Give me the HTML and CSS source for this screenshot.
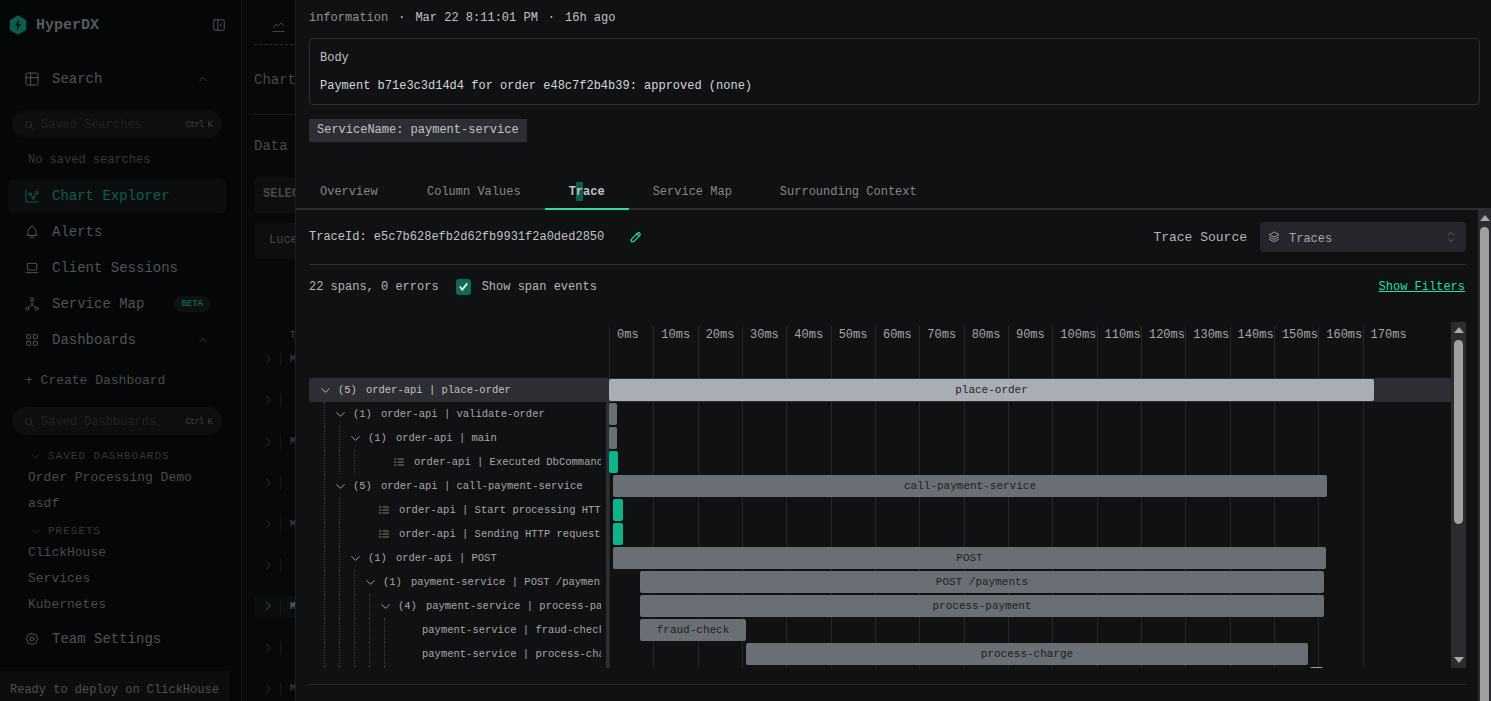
FILE: index.html
```html
<!DOCTYPE html>
<html lang="en">
<head>
    <meta charset="UTF-8">
    <meta name="viewport" content="width=device-width, initial-scale=1.0">
    <title>HyperDX - Chart Explorer</title>
    <link rel="stylesheet" href="styles.css">
</head>
<body>
    <svg class="sprite" aria-hidden="true">
        <symbol id="i-table" viewBox="0 0 24 24"><path d="M3 5a2 2 0 0 1 2-2h14a2 2 0 0 1 2 2v14a2 2 0 0 1-2 2H5a2 2 0 0 1-2-2zM3 10h18M10 3v18"/></symbol>
        <symbol id="i-chart" viewBox="0 0 24 24"><path d="M3 3v18h18"/><circle cx="9" cy="9" r="2"/><circle cx="19" cy="7" r="2"/><circle cx="14" cy="15" r="2"/><path d="M10.16 10.62l2.34 2.88M15.09 13.33l2.84-4.59"/></symbol>
        <symbol id="i-bell" viewBox="0 0 24 24"><path d="M10 5a2 2 0 1 1 4 0a7 7 0 0 1 4 6v3a4 4 0 0 0 2 3H4a4 4 0 0 0 2-3v-3a7 7 0 0 1 4-6M9 17v1a3 3 0 0 0 6 0v-1"/></symbol>
        <symbol id="i-laptop" viewBox="0 0 24 24"><path d="M3 19h18M5 6a1 1 0 0 1 1-1h12a1 1 0 0 1 1 1v8a1 1 0 0 1-1 1H6a1 1 0 0 1-1-1z"/></symbol>
        <symbol id="i-map" viewBox="0 0 24 24"><circle cx="12" cy="5" r="2.4"/><circle cx="5" cy="19" r="2.4"/><circle cx="19" cy="19" r="2.4"/><path d="M6.5 17.5l5.5-4.5l5.5 4.5M12 7.5V13"/></symbol>
        <symbol id="i-grid" viewBox="0 0 24 24"><rect x="4" y="4" width="6" height="6" rx="1"/><rect x="14" y="4" width="6" height="6" rx="1"/><rect x="4" y="14" width="6" height="6" rx="1"/><rect x="14" y="14" width="6" height="6" rx="1"/></symbol>
        <symbol id="i-gear" viewBox="0 0 24 24"><path d="M10.325 4.317c.426-1.756 2.924-1.756 3.35 0a1.724 1.724 0 0 0 2.573 1.066c1.543-.94 3.31.826 2.37 2.37a1.724 1.724 0 0 0 1.065 2.572c1.756.426 1.756 2.924 0 3.35a1.724 1.724 0 0 0-1.066 2.573c.94 1.543-.826 3.31-2.37 2.37a1.724 1.724 0 0 0-2.572 1.065c-.426 1.756-2.924 1.756-3.35 0a1.724 1.724 0 0 0-2.573-1.066c-1.543.94-3.31-.826-2.37-2.37a1.724 1.724 0 0 0-1.065-2.572c-1.756-.426-1.756-2.924 0-3.35a1.724 1.724 0 0 0 1.066-2.573c-.94-1.543.826-3.31 2.37-2.37c1 .608 2.296.07 2.572-1.065z"/><circle cx="12" cy="12" r="3"/></symbol>
        <symbol id="i-search" viewBox="0 0 24 24"><circle cx="10" cy="10" r="7"/><path d="M21 21l-6-6"/></symbol>
        <symbol id="i-up" viewBox="0 0 24 24"><path d="M6 15l6-6l6 6"/></symbol>
        <symbol id="i-down" viewBox="0 0 24 24"><path d="M6 9l6 6l6-6"/></symbol>
        <symbol id="i-right" viewBox="0 0 24 24"><path d="M9 5l7 7l-7 7"/></symbol>
        <symbol id="i-panel" viewBox="0 0 24 24"><rect x="3" y="3" width="18" height="18" rx="2"/><path d="M10 3v18M16.5 9.5L14 12l2.5 2.5"/></symbol>
        <symbol id="i-line" viewBox="0 0 24 24"><path d="M3 20h18M4 14l4-6l4 3l4-5l4 5"/></symbol>
        <symbol id="i-stack" viewBox="0 0 24 24"><path d="M12 4L4 8l8 4l8-4zM4 12l8 4l8-4M4 16l8 4l8-4"/></symbol>
        <symbol id="i-select" viewBox="0 0 24 24"><path d="M8 9l4-4l4 4M16 15l-4 4l-4-4"/></symbol>
        <symbol id="i-pencil" viewBox="0 0 24 24"><path d="M4 20h4L18.5 9.5a2.83 2.83 0 0 0-4-4L4 16zM13.5 6.5l4 4"/></symbol>
        <symbol id="i-list" viewBox="0 0 24 24"><path d="M10 6h11M10 12h11M10 18h11M3 6h3M3 12h3M3 18h3"/></symbol>
    </svg>

    <aside class="sidebar">
        <div class="brand">
            <svg class="logo" viewBox="0 0 24 26"><path class="logo-hex" d="M12 0l11 6.5v13L12 26L1 19.5v-13z"/><path class="logo-bolt" d="M14 5l-6 9h3.5L10 21l6-9.5h-3.5z"/></svg>
            <span class="brand-name">HyperDX</span>
            <svg class="icon brand-toggle"><use href="#i-panel"/></svg>
        </div>

        <div class="nav-item nav-first">
            <svg class="icon"><use href="#i-table"/></svg><span>Search</span>
            <svg class="icon chevron"><use href="#i-up"/></svg>
        </div>
        <div class="pill pill-searches">
            <svg class="icon"><use href="#i-search"/></svg><span>Saved Searches</span><kbd>Ctrl K</kbd>
        </div>
        <div class="empty-note">No saved searches</div>

        <div class="nav-item active">
            <svg class="icon"><use href="#i-chart"/></svg><span>Chart Explorer</span>
        </div>
        <div class="nav-item">
            <svg class="icon"><use href="#i-bell"/></svg><span>Alerts</span>
        </div>
        <div class="nav-item">
            <svg class="icon"><use href="#i-laptop"/></svg><span>Client Sessions</span>
        </div>
        <div class="nav-item">
            <svg class="icon"><use href="#i-map"/></svg><span>Service Map</span><b class="beta">BETA</b>
        </div>
        <div class="nav-item">
            <svg class="icon"><use href="#i-grid"/></svg><span>Dashboards</span>
            <svg class="icon chevron"><use href="#i-up"/></svg>
        </div>

        <div class="create-link">+ Create Dashboard</div>
        <div class="pill pill-dashboards">
            <svg class="icon"><use href="#i-search"/></svg><span>Saved Dashboards</span><kbd>Ctrl K</kbd>
        </div>

        <div class="group-title group-saved"><svg class="icon"><use href="#i-down"/></svg>SAVED DASHBOARDS</div>
        <div class="sub-link">Order Processing Demo</div>
        <div class="sub-link">asdf</div>
        <div class="group-title group-presets"><svg class="icon"><use href="#i-down"/></svg>PRESETS</div>
        <div class="sub-link">ClickHouse</div>
        <div class="sub-link">Services</div>
        <div class="sub-link">Kubernetes</div>

        <div class="nav-item nav-team">
            <svg class="icon"><use href="#i-gear"/></svg><span>Team Settings</span>
        </div>
        <div class="deploy-note">Ready to deploy on ClickHouse</div>
    </aside>

    <main class="page">
        <div class="page-tabs"><svg class="icon"><use href="#i-line"/></svg></div>
        <div class="page-title">Chart Explorer</div>
        <div class="page-label">Data Source</div>
        <div class="page-box page-select">SELECT</div>
        <div class="page-box page-lucene">Lucene</div>
        <div class="page-th">Timestamp</div>
        <div class="log-list">
            <div class="log-line"><svg class="icon"><use href="#i-right"/></svg><i></i><span>M</span></div>
            <div class="log-line"><span>M</span></div>
            <div class="log-line"><svg class="icon"><use href="#i-right"/></svg><i></i></div>
            <div class="log-line"></div>
            <div class="log-line"><svg class="icon"><use href="#i-right"/></svg><i></i><span>M</span></div>
            <div class="log-line"><span>M</span></div>
            <div class="log-line"><svg class="icon"><use href="#i-right"/></svg><i></i></div>
            <div class="log-line"></div>
            <div class="log-line"><svg class="icon"><use href="#i-right"/></svg><i></i><span>M</span></div>
            <div class="log-line"><span>M</span></div>
            <div class="log-line"><svg class="icon"><use href="#i-right"/></svg><i></i></div>
            <div class="log-line"></div>
            <div class="log-line current"><svg class="icon"><use href="#i-right"/></svg><i></i><span>M</span></div>
            <div class="log-line"><span>M</span></div>
            <div class="log-line"><svg class="icon"><use href="#i-right"/></svg><i></i></div>
            <div class="log-line"></div>
            <div class="log-line"><svg class="icon"><use href="#i-right"/></svg><i></i><span>M</span></div>
        </div>
    </main>

    <section class="drawer">
        <div class="log-head">
            <div class="meta">
                <span class="meta-level">information</span><span>·</span><span>Mar 22 8:11:01 PM</span><span>·</span><span>16h ago</span>
            </div>
            <div class="body-box">
                <div class="body-label">Body</div>
                <div class="body-text">Payment b71e3c3d14d4 for order e48c7f2b4b39: approved (none)</div>
            </div>
            <div class="tag">ServiceName: payment-service</div>
        </div>

        <div class="tabs">
            <div class="tab tab-first">Overview</div>
            <div class="tab">Column Values</div>
            <div class="tab tab-active">T<span class="tab-mark">r</span>ace</div>
            <div class="tab">Service Map</div>
            <div class="tab">Surrounding Context</div>
        </div>

        <div class="panel">
            <div class="panel-content">
                <div class="trace-head">
                    <span class="trace-id">TraceId: e5c7b628efb2d62fb9931f2a0ded2850</span>
                    <svg class="icon pencil"><use href="#i-pencil"/></svg>
                    <span class="source-label">Trace Source</span>
                    <div class="source-select">
                        <svg class="icon"><use href="#i-stack"/></svg><span>Traces</span>
                        <svg class="icon select-arrows"><use href="#i-select"/></svg>
                    </div>
                </div>
                <div class="trace-options">
                    <span>22 spans, 0 errors</span>
                    <span class="check"><svg viewBox="0 0 24 24"><path d="M6 12l4 5l8-10"/></svg></span>
                    <span>Show span events</span>
                    <a class="show-filters">Show Filters</a>
                </div>

                <div class="trace">
                    <div class="trace-main">
                        <div class="ticks">
                            <div class="tick">0ms</div><div class="tick">10ms</div><div class="tick">20ms</div>
                            <div class="tick">30ms</div><div class="tick">40ms</div><div class="tick">50ms</div>
                            <div class="tick">60ms</div><div class="tick">70ms</div><div class="tick">80ms</div>
                            <div class="tick">90ms</div><div class="tick">100ms</div><div class="tick">110ms</div>
                            <div class="tick">120ms</div><div class="tick">130ms</div><div class="tick">140ms</div>
                            <div class="tick">150ms</div><div class="tick">160ms</div><div class="tick">170ms</div>
                        </div>

                        <div class="span-row selected">
                            <div class="span-label">
                                <svg class="icon fold"><use href="#i-down"/></svg><span class="count">(5)</span><span>order-api | place-order</span>
                            </div>
                            <div class="split"></div>
                            <div class="span-track"><div class="bar bar-root" style="margin-left:0;width:765px">place-order</div></div>
                        </div>
                        <div class="span-row">
                            <div class="span-label">
                                <i class="guide"></i>
                                <svg class="icon fold"><use href="#i-down"/></svg><span class="count">(1)</span><span>order-api | validate-order</span>
                            </div>
                            <div class="split"></div>
                            <div class="span-track"><div class="bar" style="margin-left:0;width:8px"></div></div>
                        </div>
                        <div class="span-row">
                            <div class="span-label">
                                <i class="guide"></i><i class="guide"></i>
                                <svg class="icon fold"><use href="#i-down"/></svg><span class="count">(1)</span><span>order-api | main</span>
                            </div>
                            <div class="split"></div>
                            <div class="span-track"><div class="bar" style="margin-left:0;width:8px"></div></div>
                        </div>
                        <div class="span-row">
                            <div class="span-label">
                                <i class="guide"></i><i class="guide"></i><i class="guide"></i>
                                <span class="leaf-pad"></span><svg class="icon event"><use href="#i-list"/></svg><span>order-api | Executed DbCommand (3ms)</span>
                            </div>
                            <div class="split"></div>
                            <div class="span-track"><div class="bar bar-event" style="margin-left:0;width:9px"></div></div>
                        </div>
                        <div class="span-row">
                            <div class="span-label">
                                <i class="guide"></i>
                                <svg class="icon fold"><use href="#i-down"/></svg><span class="count">(5)</span><span>order-api | call-payment-service</span>
                            </div>
                            <div class="split"></div>
                            <div class="span-track"><div class="bar" style="margin-left:4px;width:714px">call-payment-service</div></div>
                        </div>
                        <div class="span-row">
                            <div class="span-label">
                                <i class="guide"></i><i class="guide"></i>
                                <span class="leaf-pad"></span><svg class="icon event"><use href="#i-list"/></svg><span>order-api | Start processing HTTP request</span>
                            </div>
                            <div class="split"></div>
                            <div class="span-track"><div class="bar bar-event" style="margin-left:4px;width:10px"></div></div>
                        </div>
                        <div class="span-row">
                            <div class="span-label">
                                <i class="guide"></i><i class="guide"></i>
                                <span class="leaf-pad"></span><svg class="icon event"><use href="#i-list"/></svg><span>order-api | Sending HTTP request</span>
                            </div>
                            <div class="split"></div>
                            <div class="span-track"><div class="bar bar-event" style="margin-left:4px;width:10px"></div></div>
                        </div>
                        <div class="span-row">
                            <div class="span-label">
                                <i class="guide"></i><i class="guide"></i>
                                <svg class="icon fold"><use href="#i-down"/></svg><span class="count">(1)</span><span>order-api | POST</span>
                            </div>
                            <div class="split"></div>
                            <div class="span-track"><div class="bar" style="margin-left:4px;width:713px">POST</div></div>
                        </div>
                        <div class="span-row">
                            <div class="span-label">
                                <i class="guide"></i><i class="guide"></i><i class="guide"></i>
                                <svg class="icon fold"><use href="#i-down"/></svg><span class="count">(1)</span><span>payment-service | POST /payments</span>
                            </div>
                            <div class="split"></div>
                            <div class="span-track"><div class="bar" style="margin-left:31px;width:684px">POST /payments</div></div>
                        </div>
                        <div class="span-row">
                            <div class="span-label">
                                <i class="guide"></i><i class="guide"></i><i class="guide"></i><i class="guide"></i>
                                <svg class="icon fold"><use href="#i-down"/></svg><span class="count">(4)</span><span>payment-service | process-payment</span>
                            </div>
                            <div class="split"></div>
                            <div class="span-track"><div class="bar" style="margin-left:31px;width:684px">process-payment</div></div>
                        </div>
                        <div class="span-row">
                            <div class="span-label">
                                <i class="guide"></i><i class="guide"></i><i class="guide"></i><i class="guide"></i><i class="guide"></i>
                                <span class="leaf-pad"></span><span>payment-service | fraud-check</span>
                            </div>
                            <div class="split"></div>
                            <div class="span-track"><div class="bar" style="margin-left:31px;width:106px">fraud-check</div></div>
                        </div>
                        <div class="span-row">
                            <div class="span-label">
                                <i class="guide"></i><i class="guide"></i><i class="guide"></i><i class="guide"></i><i class="guide"></i>
                                <span class="leaf-pad"></span><span>payment-service | process-charge</span>
                            </div>
                            <div class="split"></div>
                            <div class="span-track"><div class="bar" style="margin-left:137px;width:562px">process-charge</div></div>
                        </div>
                        <div class="span-row">
                            <div class="span-label">
                                <i class="guide"></i><i class="guide"></i><i class="guide"></i><i class="guide"></i><i class="guide"></i>
                            </div>
                            <div class="split"></div>
                            <div class="span-track"><div class="bar bar-last" style="margin-left:701px;width:13px"></div></div>
                        </div>
                    </div>
                    <div class="scrollbar scrollbar-inner">
                        <span class="arrow-up"></span>
                        <span class="thumb"></span>
                        <span class="arrow-down"></span>
                    </div>
                </div>
                <div class="bottom-rule"></div>
            </div>
            <div class="scrollbar scrollbar-outer">
                <span class="arrow-up"></span>
                <span class="thumb"></span>
            </div>
        </div>
    </section>
</body>
</html>
```

FILE: styles.css
```css
* {
    box-sizing: border-box;
}
html, body {
    height: 100%;
}
body {
    margin: 0;
    display: flex;
    height: 701px;
    overflow: hidden;
    position: relative;
    background: #07080a;
    color: #c1c2c5;
    font-family: 'Liberation Mono', monospace;
    font-size: 12px;
}
.sprite {
    display: none;
}
.icon {
    width: 16px;
    height: 16px;
    flex: none;
    fill: none;
    stroke: currentColor;
    stroke-width: 1.5;
    stroke-linecap: round;
    stroke-linejoin: round;
}

/* sidebar, dimmed by the drawer overlay */
.sidebar {
    width: 242px;
    flex: none;
    display: flex;
    flex-direction: column;
    background: #050608;
    border-right: 1px solid #15171a;
    color: #4e5458;
    font-size: 14px;
}
.brand {
    height: 50px;
    display: flex;
    align-items: center;
    padding-left: 9px;
}
.logo {
    width: 18px;
    height: 20px;
}
.logo-hex {
    fill: #0e5d4e;
}
.logo-bolt {
    fill: #04130f;
}
.brand-name {
    margin-left: 9px;
    font-size: 15px;
    font-weight: bold;
    color: #565b5f;
}
.brand-toggle {
    width: 14px;
    height: 14px;
    margin-left: 113px;
    stroke-width: 1.7;
}
.nav-item {
    height: 36px;
    display: flex;
    align-items: center;
    gap: 12px;
    margin: 0 15px 0 8px;
    padding: 2px 0 0 16px;
}
.nav-first {
    margin-top: 10px;
}
.nav-item .chevron {
    width: 12px;
    height: 12px;
    margin: 0 17px 0 auto;
}
.nav-item.active {
    height: 34px;
    margin-top: 10px;
    padding-top: 0;
    background: #0c0d0f;
    border-radius: 6px;
    color: #0f5e50;
}
.beta {
    margin-left: 18px;
    padding: 2px 7px;
    border-radius: 9px;
    background: #0e1012;
    color: #0f5e50;
    font-size: 9px;
    line-height: 12px;
}
.pill {
    height: 28px;
    margin: 0 19px 0 12px;
    display: flex;
    align-items: center;
    padding: 2px 10px 0 12px;
    border-radius: 14px;
    background: #0d0e10;
    color: #1f2225;
    font-size: 12px;
}
.pill .icon {
    width: 11px;
    height: 11px;
    margin-right: 6px;
    color: #33373b;
}
.pill kbd {
    margin-left: auto;
    font-family: inherit;
    font-size: 9px;
    letter-spacing: -1px;
    color: #3c4145;
}
.pill-searches {
    margin-top: 14px;
}
.pill-dashboards {
    margin-top: 17px;
}
.empty-note {
    height: 20px;
    line-height: 22px;
    margin-top: 11px;
    padding-left: 28px;
    font-size: 12px;
    color: #33383c;
}
.create-link {
    height: 20px;
    line-height: 22px;
    margin-top: 13px;
    padding-left: 25px;
    font-size: 13px;
    color: #464c50;
}
.group-title {
    height: 16px;
    display: flex;
    align-items: center;
    padding: 2px 0 0 29px;
    gap: 6px;
    font-size: 11px;
    letter-spacing: 1px;
    color: #33383c;
}
.group-title .icon {
    width: 13px;
    height: 13px;
}
.group-saved {
    margin-top: 12px;
}
.group-presets {
    margin-top: 6px;
}
.sub-link {
    height: 26px;
    line-height: 28px;
    padding-left: 28px;
    font-size: 13px;
    color: #464c50;
}
.group-saved + .sub-link {
    margin-top: 1px;
}
.group-presets + .sub-link {
    margin-top: 1px;
}
.nav-team {
    margin-top: 3px;
}
.deploy-note {
    margin-top: auto;
    width: 230px;
    height: 30px;
    line-height: 38px;
    padding-left: 10px;
    background: #0c0d0f;
    font-size: 12px;
    color: #4a5054;
}

/* page behind the drawer */
.page {
    width: 100%;
    padding-left: 12px;
    color: #44494d;
    font-size: 14px;
    overflow: hidden;
}
.page-tabs {
    height: 45px;
    width: 60px;
    padding: 19px 0 0 17px;
    border-bottom: 1px dashed #2a2d30;
}
.page-tabs .icon {
    width: 15px;
    height: 15px;
}
.page-title {
    height: 70px;
    line-height: 70px;
    white-space: nowrap;
    border-bottom: 1px solid #191b1e;
    width: 60px;
    overflow: hidden;
}
.page-label {
    height: 62px;
    line-height: 62px;
    white-space: nowrap;
}
.page-box {
    height: 36px;
    width: 60px;
    line-height: 34px;
    padding-left: 9px;
    background: #0d0e10;
    border-radius: 4px;
    font-size: 12px;
    white-space: nowrap;
    overflow: hidden;
}
.page-select {
    font-weight: bold;
}
.page-lucene {
    margin-top: 10px;
    padding-left: 15px;
}
.page-th {
    padding-left: 36px;
    margin-top: 71px;
    height: 18px;
    font-size: 10px;
    white-space: nowrap;
}
.log-list {
    margin-top: 1px;
    width: 60px;
}
.log-line {
    height: 20.6px;
    display: flex;
    align-items: center;
    padding-left: 7px;
    font-size: 10px;
}
.log-line .icon {
    width: 14px;
    height: 14px;
    margin-right: 5px;
    color: #2f3336;
}
.log-line i {
    width: 1px;
    height: 14px;
    margin-right: 9px;
    background: #15171a;
}
.log-line span {
    margin-left: 36px;
}
.log-line i + span {
    margin-left: 0;
}
.log-line.current {
    background: #0c0d0f;
}
.log-line.current .icon {
    color: #0f6f78;
}
.log-line.current span {
    font-weight: bold;
    color: #5a6064;
}

/* log detail drawer */
.drawer {
    position: absolute;
    top: 0;
    right: 0;
    bottom: 0;
    width: 1195px;
    display: flex;
    flex-direction: column;
    background: #101113;
    box-shadow: -1px 0 0 #1c1e21;
}
.log-head {
    padding: 7px 11px 0 13px;
}
.meta {
    height: 20px;
    display: flex;
    align-items: center;
    gap: 10px;
    padding-top: 2px;
    color: #c1c2c5;
}
.meta-level {
    color: #909296;
}
.body-box {
    height: 67px;
    margin-top: 11px;
    padding: 9px 10px;
    border: 1px solid #2c2e33;
    border-radius: 4px;
}
.body-label {
    height: 20px;
    line-height: 20px;
}
.body-text {
    height: 20px;
    line-height: 20px;
    margin-top: 8px;
    color: #d5d6d9;
}
.tag {
    display: inline-block;
    height: 23px;
    line-height: 23px;
    margin-top: 14px;
    padding: 0 8px;
    background: #2c2e33;
}
.tabs {
    height: 38px;
    margin-top: 30px;
    display: flex;
    border-bottom: 2px solid #2c2e33;
    color: #85878b;
}
.tab {
    height: 38px;
    padding: 0 24px;
    line-height: 41px;
    white-space: nowrap;
    flex: none;
}
.tab-first {
    margin-right: 1.4px;
}
.tab-active {
    color: #c1c2c5;
    font-weight: bold;
    border-bottom: 2px solid #25dfa6;
}
.tab-mark {
    display: inline-block;
    height: 19px;
    line-height: 21px;
    background: #0d5c4d;
    vertical-align: top;
    margin-top: 10px;
}
.panel {
    flex: 1;
    min-height: 0;
    display: flex;
}
.panel-content {
    flex: 1;
    min-width: 0;
    padding: 12px 12px 0 13px;
}
.trace-head {
    height: 30px;
    display: flex;
    align-items: center;
}
.pencil {
    width: 14px;
    height: 14px;
    margin-left: 25px;
    stroke-width: 2;
    color: #25dfa6;
}
.source-label {
    margin-left: auto;
    font-size: 13px;
    color: #b4b6ba;
}
.source-select {
    width: 206px;
    height: 30px;
    margin-left: 13px;
    display: flex;
    align-items: center;
    padding: 0 7px;
    gap: 8px;
    background: #25262b;
    border-radius: 4px;
    color: #a6a7ab;
}
.source-select span {
    padding-top: 4px;
}
.source-select .icon {
    width: 14px;
    height: 14px;
}
.source-select .select-arrows {
    width: 16px;
    height: 16px;
    margin-left: auto;
    color: #5c5f66;
}
.trace-options {
    height: 32px;
    margin-top: 12px;
    padding-top: 13px;
    border-top: 1px solid #2c2e33;
    display: flex;
    align-items: center;
    color: #b4b6ba;
}
.check {
    width: 15px;
    height: 16px;
    margin: 0 11px 0 17px;
    background: #0d6b56;
    border-radius: 3px;
}
.check svg {
    display: block;
    fill: none;
    stroke: #e6e8ea;
    stroke-width: 3;
}
.show-filters {
    margin-left: auto;
    margin-right: 1px;
    color: #25dfa6;
    text-decoration: underline;
}

/* trace waterfall */
.trace {
    height: 346px;
    margin-top: 26px;
    display: flex;
    overflow: hidden;
}
.trace-main {
    position: relative;
    flex: 1;
    min-width: 0;
    padding-top: 56px;
}
.ticks {
    position: absolute;
    top: 4px;
    bottom: 0;
    left: 300px;
    display: flex;
}
.tick {
    width: 44.33px;
    flex: none;
    padding-left: 7px;
    border-left: 1px solid #26282c;
    line-height: 18px;
    color: #a6a7ab;
    white-space: nowrap;
}
.span-row {
    position: relative;
    height: 24px;
    display: flex;
}
.span-row.selected {
    background: #2c2e33;
    border-radius: 2px 0 0 2px;
}
.span-label {
    width: 292px;
    margin-right: 5px;
    flex: none;
    display: flex;
    align-items: center;
    padding-left: 9px;
    overflow: hidden;
    white-space: nowrap;
    font-size: 10.5px;
    color: #a6a7ab;
}
.selected .span-label {
    color: #c1c2c5;
}
.guide {
    width: 9px;
    height: 24px;
    margin-left: 6px;
    flex: none;
    border-left: 1px dotted #3a3c41;
}
.fold {
    width: 15px;
    height: 15px;
    margin-right: 5px;
}
.count {
    margin-right: 9px;
}
.leaf-pad {
    width: 29px;
    flex: none;
}
.event {
    width: 12px;
    height: 12px;
    margin: 0 9px 0 1px;
}
.split {
    width: 3px;
    flex: none;
    background: #2c2e33;
}
.span-track {
    flex: 1;
    min-width: 0;
    padding-top: 1px;
}
.bar {
    height: 22px;
    line-height: 22px;
    background: #6a6f76;
    border-radius: 2px;
    text-align: center;
    font-size: 11px;
    color: #1d1e21;
    white-space: nowrap;
    overflow: hidden;
}
.bar-root {
    background: #a9aeb6;
    color: #232427;
}
.bar-event {
    background: #0db48a;
}
.bar-last {
    background: #9a9da2;
}
.bottom-rule {
    margin-top: 16px;
    border-top: 1px solid #2c2e33;
}

/* fake scrollbars, as drawn by the browser in the shot */
.scrollbar {
    width: 15px;
    flex: none;
    display: flex;
    flex-direction: column;
    align-items: center;
    background: #2b2c30;
}
.thumb {
    width: 9px;
    background: #a0a0a0;
    border-radius: 5px;
}
.arrow-up, .arrow-down {
    width: 0;
    height: 0;
    border-left: 5px solid transparent;
    border-right: 5px solid transparent;
}
.arrow-up {
    border-bottom: 6px solid #a8a8a8;
    margin-top: 5px;
}
.arrow-down {
    border-top: 6px solid #a8a8a8;
    margin-top: auto;
    margin-bottom: 5px;
}
.scrollbar-inner .thumb {
    height: 184px;
    margin-top: 7px;
}
.scrollbar-outer {
    width: 13px;
}
.scrollbar-outer .thumb {
    flex: 1;
    margin-top: 6px;
    border-radius: 5px 5px 0 0;
}
```
